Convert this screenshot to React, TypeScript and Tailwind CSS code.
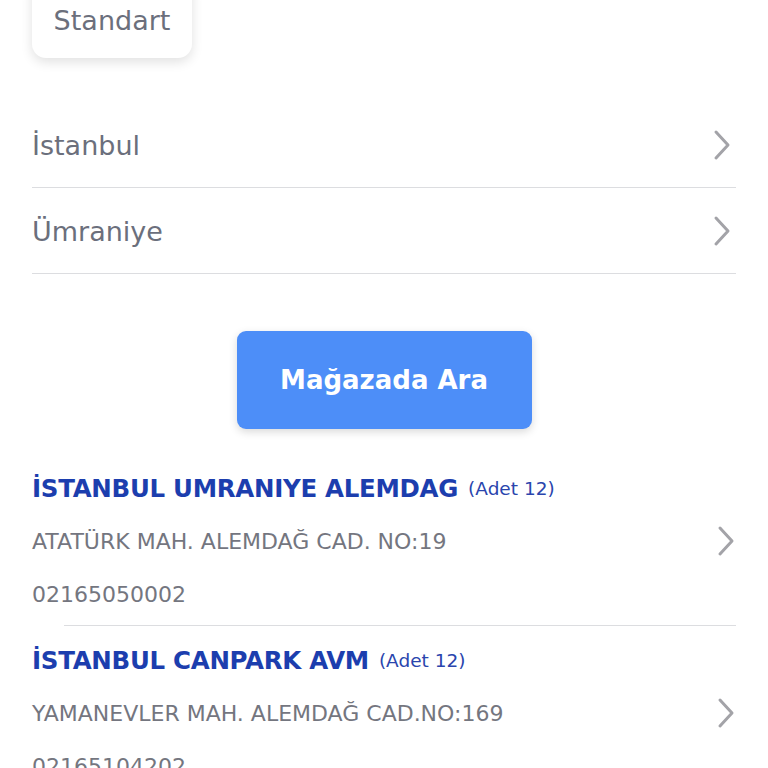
import React from 'react';

const font = { fontFamily: '"DejaVu Sans", "Noto Sans", sans-serif' };

// ── Chevron ──
const Chevron = () => (
  <svg width="20" height="32" viewBox="0 0 20 32" fill="none" className="shrink-0">
    <path d="M4 3 L16 16 L4 29" stroke="#a3a3a8" strokeWidth="3" strokeLinecap="round" strokeLinejoin="round" />
  </svg>
);

const SelectRow = ({ label }: { label: string }) => (
  <div className="flex items-center justify-between h-[86px] border-b border-[#dcdde0] pr-[4px]">
    <span className="text-[27px] text-[#6b6f7c] pt-[4px]">{label}</span>
    <Chevron />
  </div>
);

const stores = [
  { name: 'İSTANBUL UMRANIYE ALEMDAG', count: 12, address: 'ATATÜRK MAH. ALEMDAĞ CAD. NO:19', phone: '02165050002' },
  { name: 'İSTANBUL CANPARK AVM', count: 12, address: 'YAMANEVLER MAH. ALEMDAĞ CAD.NO:169', phone: '02165104202' },
];

const StoreItem = ({ store, last }: { store: (typeof stores)[number]; last?: boolean }) => (
  <div>
    <div className="flex gap-[10px] h-[40px] items-center">
      <span className="text-[24.5px] font-bold text-[#1c3eae] tracking-[-0.3px]">{store.name}</span>
      <span className="text-[18.5px] text-[#2a45ad]">(Adet {store.count})</span>
    </div>
    <div className="flex items-center justify-between h-[52px] mt-[6px]">
      <span className="text-[22px] text-[#74767f]">{store.address}</span>
      <Chevron />
    </div>
    <div className="h-[54px] flex items-center">
      <span className="text-[22px] text-[#74767f]">{store.phone}</span>
    </div>
    {!last && <div className="ml-[32px] border-b border-[#dcdde0] mt-[4px] mb-[15px]" />}
  </div>
);

export default function App() {
  return (
    <div className="w-[768px] h-[768px] overflow-hidden bg-white" style={font}>
      <div className="px-[32px]">
        {/* ── Type card ── */}
        <div className="w-[160px] h-[80px] -mt-[22px] rounded-[14px] bg-white shadow-[0_4px_12px_rgba(0,0,0,0.12)] flex items-center justify-center pt-[6px]">
          <span className="text-[27px] text-[#6b6f7c]">Standart</span>
        </div>

        {/* ── City / district ── */}
        <div className="mt-[44px]">
          <SelectRow label="İstanbul" />
          <SelectRow label="Ümraniye" />
        </div>

        {/* ── Search button ── */}
        <div className="flex justify-center mt-[57px]">
          <button className="w-[295px] h-[98px] rounded-[9px] bg-[#4d8ef8] text-white text-[26px] font-bold shadow-[0_3px_8px_rgba(0,0,0,0.15)]">
            Mağazada Ara
          </button>
        </div>

        {/* ── Store list ── */}
        <div className="mt-[40px]">
          {stores.map((s, i) => (
            <StoreItem key={s.name} store={s} last={i === stores.length - 1} />
          ))}
        </div>
      </div>
    </div>
  );
}
